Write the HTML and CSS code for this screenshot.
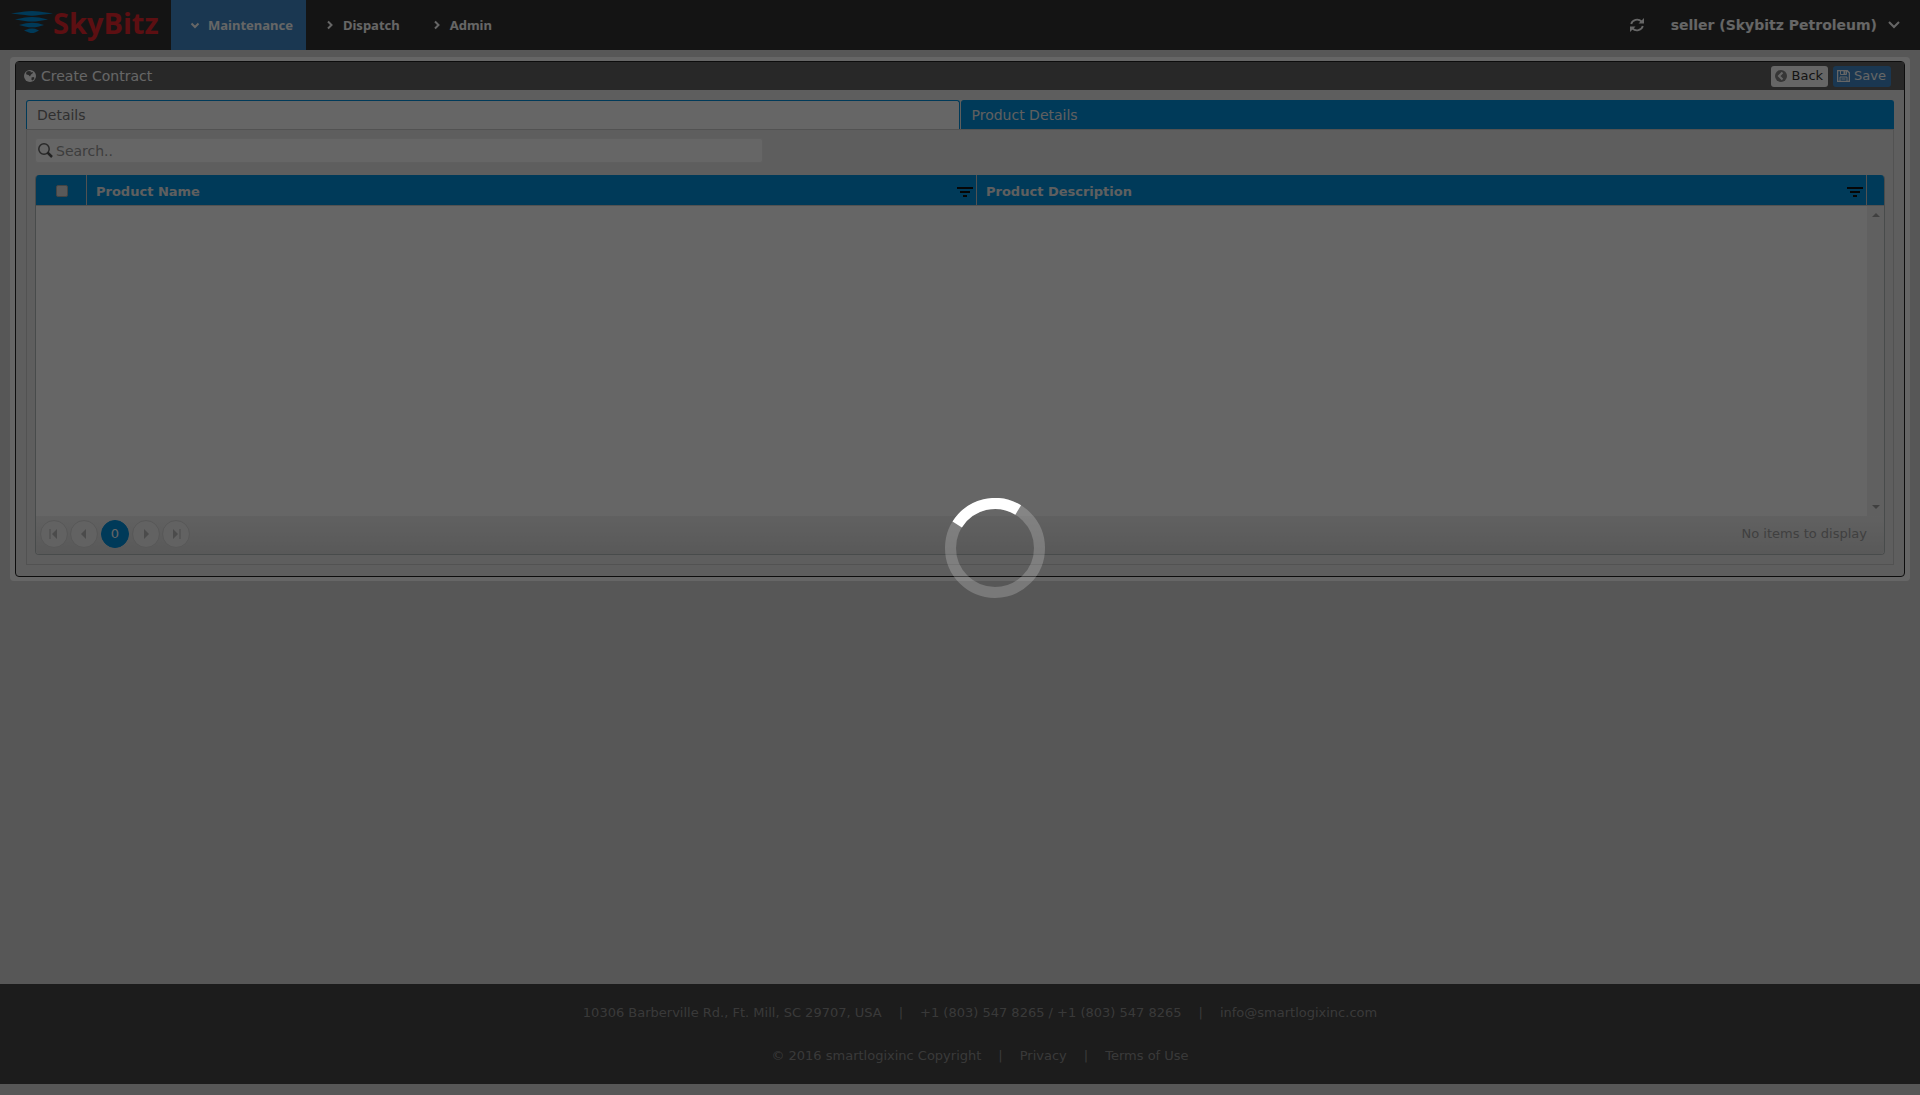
FILE: index.html
```html
<!DOCTYPE html>
<html lang="en">
<head>
<meta charset="utf-8">
<title>Create Contract</title>
<link rel="stylesheet" href="styles.css">
</head>
<body>
<header class="topbar">
  <a class="brand" href="#" aria-label="SkyBitz home">
    <svg class="brand-mark" viewBox="0 0 42 24" width="42" height="24" aria-hidden="true">
      <path d="M0 3.500L14 1.500Q21 .5 28 1.500L42 3.500L28 5Q21 6.500 14 5zM4 9.500L14 7.500Q21 6.500 28 7.500L37 9.500L28 11Q21 12 14 11zM8 15L15 13.200Q21 12.500 27 13.200L33 15L27 16.800Q21 17.800 15 16.800zM13 20.500L18 18.800Q21 18.300 24 18.800L28 20.500L24 22.500Q21 23.500 18 22.500z" fill="#0091df"/>
    </svg>
    <span class="brand-name">SkyBitz</span>
  </a>
  <nav class="menu">
    <a class="menu-item active" href="#"><svg viewBox="0 0 10 10" width="10" height="10" aria-hidden="true"><path d="M1.500 3.500L5 7L8.500 3.500"/></svg>Maintenance</a>
    <a class="menu-item" href="#"><svg viewBox="0 0 10 10" width="10" height="10" aria-hidden="true"><path d="M3 1.500L6.500 5L3 8.500"/></svg>Dispatch</a>
    <a class="menu-item" href="#"><svg viewBox="0 0 10 10" width="10" height="10" aria-hidden="true"><path d="M3 1.500L6.500 5L3 8.500"/></svg>Admin</a>
  </nav>
  <button class="refresh" type="button" aria-label="Refresh">
    <svg viewBox="0 0 14 14" width="14" height="14" aria-hidden="true"><g fill="none" stroke="#fff" stroke-width="1.800"><path d="M1.200 6A6 5.500 0 0 1 11.500 3.500"/><path d="M12.800 8A6 5.500 0 0 1 2.500 10.500"/></g><path d="M14 0V5.500H8.500zM0 14V8.500H5.500z" fill="#fff"/></svg>
  </button>
  <button class="account" type="button">seller (Skybitz Petroleum)
    <svg viewBox="0 0 12 12" width="12" height="12" aria-hidden="true"><path d="M1 3L6 8L11 3"/></svg>
  </button>
</header>

<main class="page">
  <section class="frame">
    <div class="panel">
      <div class="panel-head">
        <svg viewBox="0 0 12 12" width="12" height="12" aria-hidden="true"><circle cx="6" cy="6" r="6" fill="#fff"/><path d="M3 1.500L5 1L7 1.500L6.500 2.500L9 2L8.500 3.500L7 4.500L6 6.500L4.500 5L2.500 4.500L2 3zM7.500 7.500L9.500 7L10.500 8L9 10.500L7.500 10z" fill="#646464"/></svg>
        <h1 class="panel-title">Create Contract</h1>
        <button class="btn btn-back" type="button"><svg viewBox="0 0 12 12" width="12" height="12" aria-hidden="true"><circle cx="6" cy="6" r="6" fill="#888"/><path d="M7.500 2.500L4 6L7.500 9.500" fill="none" stroke="#fff" stroke-width="2"/></svg>Back</button>
        <button class="btn btn-save" type="button"><svg viewBox="0 0 13 12" width="13" height="12" aria-hidden="true"><path d="M.5.5H10L12.500 3V11.500H.5z" fill="none" stroke="#fff" stroke-width="1.500"/><path d="M3.500 1V4.500H9.500V1M3 11.500V7H10V11.500" fill="none" stroke="#fff"/><path d="M6.500 1H8.500V4H6.500zM4.500 8.500H8.500V9.500H4.500z" fill="#fff"/></svg>Save</button>
      </div>
      <div class="panel-body">
        <div class="tabs" role="tablist">
          <button class="tab" type="button" role="tab">Details</button>
          <button class="tab selected" type="button" role="tab" aria-selected="true">Product Details</button>
        </div>
        <div class="tab-content">
          <label class="search">
            <svg viewBox="0 0 15 15" width="15" height="15" aria-hidden="true"><circle cx="6" cy="6" r="5.200" fill="none" stroke="#666" stroke-width="1.500"/><path d="M9.500 9.500L14 14" stroke="#555" stroke-width="2.500"/></svg>
            <input type="text" placeholder="Search.." aria-label="Search">
          </label>
          <div class="grid">
            <table class="grid-table">
              <thead>
                <tr>
                  <th class="col-check"><input type="checkbox" aria-label="Select all products"></th>
                  <th><div class="col-head">Product Name<svg viewBox="0 0 16 10" width="16" height="10" aria-hidden="true"><path d="M0 0H16V2H0zM3 4H13V6H3zM6 8H10V10H6z" fill="#111"/></svg></div></th>
                  <th><div class="col-head">Product Description<svg viewBox="0 0 16 10" width="16" height="10" aria-hidden="true"><path d="M0 0H16V2H0zM3 4H13V6H3zM6 8H10V10H6z" fill="#111"/></svg></div></th>
                  <th class="col-scroll"></th>
                </tr>
              </thead>
              <tbody>
                <tr>
                  <td colspan="3"></td>
                  <td class="scroll-cell"><div class="scrollbar"><i class="arrow-up"></i><i class="arrow-down"></i></div></td>
                </tr>
              </tbody>
            </table>
            <div class="pager">
              <button class="page-btn" type="button" aria-label="First page"><svg viewBox="0 0 12 12" width="12" height="12"><path d="M1.500 1H2.500V11H1.500zM9 1V11L4 6z"/></svg></button>
              <button class="page-btn" type="button" aria-label="Previous page"><svg viewBox="0 0 12 12" width="12" height="12"><path d="M8 1V11L3 6z"/></svg></button>
              <button class="page-btn current" type="button">0</button>
              <button class="page-btn" type="button" aria-label="Next page"><svg viewBox="0 0 12 12" width="12" height="12"><path d="M4 1V11L9 6z"/></svg></button>
              <button class="page-btn" type="button" aria-label="Last page"><svg viewBox="0 0 12 12" width="12" height="12"><path d="M9.500 1H10.500V11H9.500zM3 1V11L8 6z"/></svg></button>
              <span class="pager-info">No items to display</span>
            </div>
          </div>
        </div>
      </div>
    </div>
  </section>
</main>

<footer class="footer">
  <p><span>10306 Barberville Rd., Ft. Mill, SC 29707, USA</span><span>|</span><span>+1 (803) 547 8265 / +1 (803) 547 8265</span><span>|</span><a href="#">info@smartlogixinc.com</a></p>
  <p><span>© 2016 smartlogixinc Copyright</span><span>|</span><a href="#">Privacy</a><span>|</span><a href="#">Terms of Use</a></p>
</footer>

<div class="overlay" role="status" aria-label="Loading">
  <svg class="spinner" viewBox="0 0 100 100" width="100" height="100" aria-hidden="true">
    <circle cx="50" cy="50" r="44.500" fill="none" stroke="#fff" stroke-opacity=".2" stroke-width="11"/>
    <path d="M12.200 26.500A44.500 44.500 0 0 1 73.200 12" fill="none" stroke="#fff" stroke-width="11"/>
  </svg>
</div>
</body>
</html>
```
FILE: styles.css
```css
* {
  box-sizing: border-box;
}

body {
  margin: 0;
  padding-bottom: 11px;
  min-height: 100vh;
  display: flex;
  flex-direction: column;
  background: #dadada;
  font: 14px/20px "DejaVu Sans", Verdana, sans-serif;
  color: #555;
}

button {
  font: inherit;
  border: 0;
  padding: 0;
  background: none;
}

a {
  color: inherit;
  text-decoration: none;
}

/* Top bar */
.topbar {
  display: flex;
  align-items: center;
  height: 50px;
  background: #343434;
  color: #fff;
}

.brand {
  display: flex;
  width: 171px;
  height: 50px;
  padding: 10px 0 0 11px;
  color: #e8262d;
}

.brand-name {
  font: bold 29px/26px "Open Sans", sans-serif;
}

.menu {
  display: flex;
  flex: 1;
  font: bold 13px/50px "Noto Sans", sans-serif;
}

.menu-item {
  display: flex;
  align-items: center;
  gap: 8px;
  padding: 0 13px 0 19px;
}

.menu svg,
.account svg {
  fill: none;
  stroke: #fff;
  stroke-width: 2;
}

.active {
  background: #428bca;
}

.refresh {
  display: flex;
  margin-right: 27px;
}

.account {
  display: flex;
  align-items: center;
  gap: 11px;
  padding-right: 20px;
  font-weight: bold;
  color: #fff;
}

/* Contract panel */
.page {
  flex: 1;
  padding: 7px 10px;
}

.frame {
  padding: 4px 5px;
  border-radius: 4px;
  background: #fff;
}

.panel {
  border: 1px solid #222;
  border-radius: 4px;
  background: #ececec;
}

.panel-head {
  display: flex;
  align-items: center;
  height: 28px;
  padding: 0 13px 0 8px;
  background: #646464;
  color: #fff;
}

.panel-title {
  flex: 1;
  margin: 0 0 0 5px;
  font-size: 14px;
  font-weight: normal;
}

.btn {
  display: flex;
  align-items: center;
  gap: 5px;
  height: 21px;
  margin-left: 5px;
  padding: 0 5px 0 4px;
  border-radius: 3px;
  font-size: 13px;
}

.btn-back {
  background: #fff;
  color: #333;
}

.btn-save {
  gap: 4px;
  background: #428bca;
  color: #fff;
}

.panel-body {
  padding: 10px 10px 11px;
}

.tabs {
  display: flex;
  gap: 1px;
}

.tab {
  flex: 1;
  height: 29px;
  padding: 0 10px;
  border: 1px solid #0091df;
  border-bottom: 0;
  border-radius: 3px 3px 0 0;
  background: #fff;
  color: #777;
  text-align: left;
}

.selected {
  background: #0091df;
  color: #eee;
}

.tab-content {
  padding: 8px 8px 9px;
  border: 1px solid #ccc;
}

.search {
  display: flex;
  align-items: center;
  gap: 3px;
  width: 728px;
  max-width: 100%;
  height: 25px;
  padding: 0 2px;
  border: 1px solid #eee;
  border-radius: 3px;
  background: #fff;
}

.search input {
  flex: 1;
  min-width: 0;
  padding: 0;
  border: 0;
  background: none;
  font: inherit;
}

.search input::placeholder {
  color: #999;
}

/* Product grid */
.grid {
  margin-top: 12px;
  border: 1px solid #b4bcbc;
  border-top: 0;
  border-radius: 4px;
  background: #fff;
  overflow: hidden;
}

.grid-table {
  width: 100%;
  border-collapse: separate;
  border-spacing: 0;
  table-layout: fixed;
}

.grid-table th {
  height: 31px;
  padding: 0;
  border-right: 1px solid #ccc;
  border-bottom: 1px solid #ccc;
  background: #0091df;
  color: #eee;
  font-size: 13px;
  text-align: left;
}

.grid-table th.col-check {
  width: 51px;
  text-align: center;
}

.grid-table th.col-scroll {
  width: 17px;
  border-right: 0;
}

.col-check input {
  appearance: none;
  width: 12px;
  height: 12px;
  margin: 0 0 0 2px;
  border: 1px solid #aaa;
  border-radius: 2px;
  background: #dedede;
  vertical-align: middle;
}

.col-head {
  display: flex;
  align-items: center;
  justify-content: space-between;
  padding: 3px 3px 0 9px;
}

.grid-table td {
  height: 310px;
  padding: 0;
}

.scrollbar {
  display: flex;
  flex-direction: column;
  justify-content: space-between;
  align-items: center;
  height: 310px;
  padding: 7px 0;
  background: #f0f0f0;
}

.arrow-up,
.arrow-down {
  border: 4px solid transparent;
}

.arrow-up {
  border-top: 0;
  border-bottom-color: #a0a0a0;
}

.arrow-down {
  border-bottom: 0;
  border-top-color: #a0a0a0;
}

.pager {
  display: flex;
  align-items: center;
  gap: 2px;
  height: 38px;
  padding: 0 17px 2px 4px;
  background: linear-gradient(#f2f2f2, #dedede);
  font-size: 13px;
}

.page-btn {
  display: flex;
  align-items: center;
  justify-content: center;
  width: 28px;
  height: 28px;
  border: 1px solid #dadada;
  border-radius: 50%;
  background: #f4f4f4;
}

.page-btn svg {
  fill: #bbb;
}

.current {
  margin: 0 1px;
  border-color: #0091df;
  background: #0091df;
  color: #fff;
}

.pager-info {
  margin-left: auto;
  color: #a0a0a0;
}

/* Footer */
.footer {
  padding: 19px 0 18px 40px;
  background: #464646;
  color: #909090;
  font-size: 13px;
}

.footer p {
  display: flex;
  justify-content: center;
  gap: 17px;
  margin: 0;
}

.footer p + p {
  margin-top: 23px;
}

/* Loading overlay */
.overlay {
  position: fixed;
  inset: 0;
  display: flex;
  align-items: center;
  justify-content: center;
  padding-left: 70px;
  background: rgba(0, 0, 0, .6);
}
```
